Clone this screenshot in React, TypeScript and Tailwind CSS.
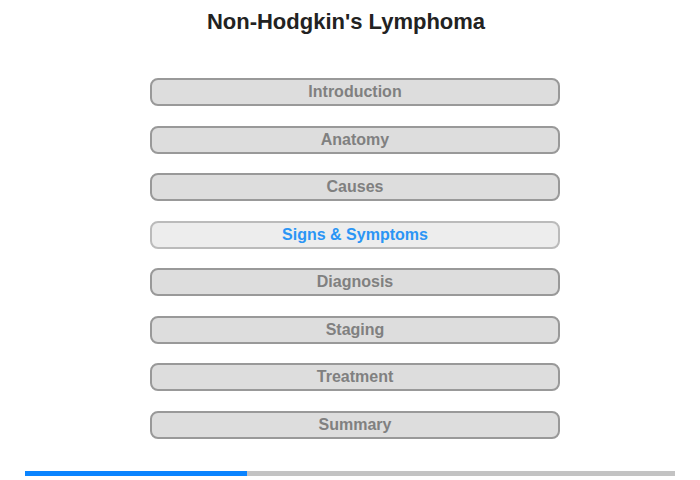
import React from 'react';

const sections = [
  'Introduction',
  'Anatomy',
  'Causes',
  'Signs & Symptoms',
  'Diagnosis',
  'Staging',
  'Treatment',
  'Summary',
];

const active = 3;

export default function App() {
  return (
    <div
      className="w-[700px] h-[480px] bg-white flex flex-col"
      style={{ fontFamily: '"Liberation Sans", Arial, sans-serif' }}
    >
      {/* Title */}
      <h1 className="pt-[8px] pr-[8px] text-center text-[22px] leading-[28px] font-bold text-[#222]">
        Non-Hodgkin's Lymphoma
      </h1>

      {/* Menu */}
      <div className="mt-[42px] flex flex-col items-center gap-[19.5px] pl-[10px]">
        {sections.map((s, i) => (
          <button
            key={s}
            className={
              i === active
                ? 'w-[410px] h-[28px] rounded-[8px] border-2 border-[#bbbbbb] bg-[#ededed] text-[#2b95f5] text-[16px] font-bold leading-none'
                : 'w-[410px] h-[28px] rounded-[8px] border-2 border-[#999999] bg-[#dddddd] text-[#808080] text-[16px] font-bold leading-none'
            }
          >
            {s}
          </button>
        ))}
      </div>

      {/* Progress */}
      <div className="mt-[32.5px] mx-[25px] h-[5px] bg-[#c3c3c3] flex">
        <div className="w-[222px] h-full bg-[#0a84ff]" />
      </div>
    </div>
  );
}
